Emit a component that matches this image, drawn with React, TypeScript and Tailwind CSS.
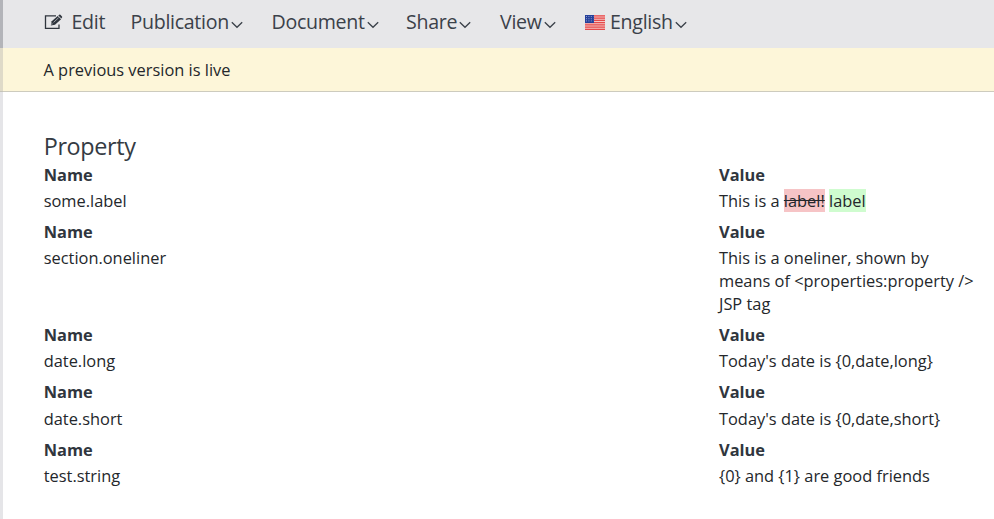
import React from 'react';

const rows: { name: string; value: React.ReactNode }[] = [
  {
    name: 'some.label',
    value: (
      <>
        This is a <del className="bg-[#f6c4c6] line-through">label!</del>{' '}
        <ins className="bg-[#cffccf] no-underline">label</ins>
      </>
    ),
  },
  { name: 'section.oneliner', value: 'This is a oneliner, shown by means of <properties:property /> JSP tag' },
  { name: 'date.long', value: "Today's date is {0,date,long}" },
  { name: 'date.short', value: "Today's date is {0,date,short}" },
  { name: 'test.string', value: '{0} and {1} are good friends' },
];

function Chevron() {
  return (
    <svg className="mt-[5px] ml-[2px] h-[8px] w-[12px] shrink-0" viewBox="0 0 12 8" fill="none" stroke="#3b4149" strokeWidth="1.3">
      <path d="M.8 1.3 6 6.3 11.2 1.3" />
    </svg>
  );
}

function EditIcon() {
  return (
    <svg className="h-[16px] w-[19px] shrink-0" viewBox="0 0 19 16">
      <path d="M12 1.9H1.5V14.4H15V10.5" fill="none" stroke="#30363e" strokeWidth="1.3" />
      <path d="m6.8 11.6.9-4.3 6-5.3 3.4 3.3-6.1 5.5Z" fill="#30363e" />
      <path d="m14.3 1.5.9-.8q.6-.4 1.2.1l1.6 1.6q.5.6 0 1.2l-.6.9Z" fill="#30363e" />
      <path d="m9.6 8.4 5-4.7M7.7 10.8l.4-1.6" stroke="#d0d1d4" strokeWidth=".7" />
    </svg>
  );
}

function Flag() {
  return (
    <svg className="h-[15px] w-[20px] shrink-0" viewBox="0 0 20 15">
      <rect width="20" height="15" fill="#f4c6c5" />
      <path d="M0 .75H20M0 3H20M0 5.3H20M0 7.6H20M0 9.9H20M0 12.2H20M0 14.4H20" stroke="#e5494a" strokeWidth="1.25" />
      <rect width="9" height="8" fill="#25409a" />
      <path d="M1 1.5H8.5M1 3.7H8.5M1 5.9H8.5" stroke="#a9b5dd" strokeWidth=".8" strokeDasharray="1 1.4" />
    </svg>
  );
}

function MenuItem({ label, className }: { label: string; className: string }) {
  return (
    <div className={`flex shrink-0 items-center whitespace-nowrap ${className}`}>
      <span>{label}</span>
      <Chevron />
    </div>
  );
}

export default function App() {
  return (
    <div className="flex h-[519px] w-[994px] overflow-hidden bg-white font-['Open_Sans',sans-serif] text-[16.4px] leading-[22.86px] text-[#24272b]">
      <div className="flex w-[3px] shrink-0 flex-col bg-[#e5e5e8]">
        <div className="h-[48px] bg-[#b3b4b9]" />
        <div className="h-[44px] border-b border-[#c5c4ba] bg-[#dfdac8]" />
      </div>
      <div className="flex min-w-0 flex-1 flex-col">
        <nav className="flex h-[48px] shrink-0 items-center bg-[#e7e7e9] pb-[3px] pl-[41px] text-[19.6px] tracking-[-0.3px] text-[#3b4149]">
          <div className="flex w-[86.5px] shrink-0 items-center">
            <EditIcon />
            <span className="ml-[8.5px]">Edit</span>
          </div>
          <MenuItem label="Publication" className="w-[141px]" />
          <MenuItem label="Document" className="w-[134.5px]" />
          <MenuItem label="Share" className="w-[94px]" />
          <MenuItem label="View" className="w-[85px]" />
          <div className="flex shrink-0 items-center">
            <Flag />
            <span className="ml-[5px]">English</span>
            <Chevron />
          </div>
        </nav>
        <div className="flex h-[44px] shrink-0 items-center border-b border-[#cdcbbe] bg-[#fdf6d9] pt-px pl-[40.5px]">
          A previous version is live
        </div>
        <main className="pt-[38.5px] pl-[40.7px]">
          <h2 className="mb-[2.1px] text-[23.4px] leading-[31px] tracking-[-0.35px] text-[#353b43]">Property</h2>
          {rows.map((row) => (
            <div key={row.name} className="mb-[8.1px] flex">
              <div className="w-[675.3px] shrink-0">
                <div className="mb-[3.5px] font-bold text-[#30363e]">Name</div>
                <div>{row.name}</div>
              </div>
              <div className="w-[258px] shrink-0">
                <div className="mb-[3.5px] font-bold text-[#30363e]">Value</div>
                <div>{row.value}</div>
              </div>
            </div>
          ))}
        </main>
      </div>
    </div>
  );
}
